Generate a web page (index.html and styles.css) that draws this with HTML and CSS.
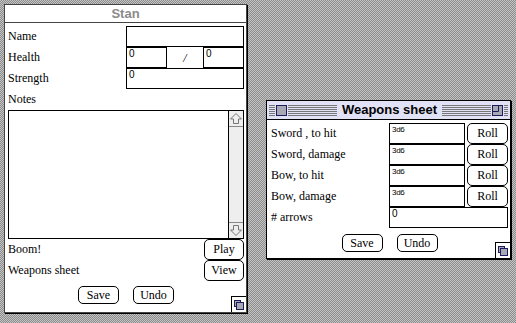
FILE: index.html
```html
<!DOCTYPE html>
<html lang="en">
  <head>
    <meta charset="UTF-8">
    <meta name="viewport" content="width=device-width, initial-scale=1.0">
    <title>Stan</title>
    <link rel="stylesheet" href="styles.css">
  </head>
  <body>
    <div class="window stan">
      <div class="titlebar">Stan</div>
      <div class="content">
        <div class="form">
          <label>Name</label>
          <div class="field"></div>
          <label>Health</label>
          <div class="health">
            <div class="field value">0</div>
            <span class="slash">/</span>
            <div class="field value">0</div>
          </div>
          <label>Strength</label>
          <div class="field value">0</div>
          <label>Notes</label>
        </div>
        <div class="notes">
          <div class="notes-text"></div>
          <div class="scrollbar">
            <div class="arrow up">
              <svg width="14" height="15" viewBox="0 0 14 15"><polygon points="7,2.5 12.5,8 9.5,8 9.5,12.5 4.5,12.5 4.5,8 1.5,8" fill="none" stroke="#777"/></svg>
            </div>
            <div class="track"></div>
            <div class="arrow down">
              <svg width="14" height="15" viewBox="0 0 14 15"><polygon points="7,12.5 12.5,7 9.5,7 9.5,2.5 4.5,2.5 4.5,7 1.5,7" fill="none" stroke="#777"/></svg>
            </div>
          </div>
        </div>
        <div class="form">
          <label>Boom!</label>
          <button class="btn side">Play</button>
          <label>Weapons sheet</label>
          <button class="btn side">View</button>
        </div>
        <div class="actions">
          <button class="btn">Save</button>
          <button class="btn">Undo</button>
        </div>
      </div>
      <div class="grow">
        <svg width="14" height="15" viewBox="0 0 14 15"><rect x="2.5" y="3.5" width="6" height="6" fill="#a8a8b4" stroke="#1c1c5c"/><rect x="4.5" y="5.5" width="7" height="7" fill="#a8a8b4" stroke="#1c1c5c"/></svg>
      </div>
    </div>

    <div class="window weapons">
      <div class="titlebar active">
        <div class="stripes">
          <span class="closebox"></span>
          <span class="title">Weapons sheet</span>
          <span class="zoombox">
            <svg width="11" height="11" viewBox="0 0 11 11"><rect x="0.5" y="0.5" width="10" height="10" fill="#a8a8b4" stroke="#1c1c5c"/><path d="M1 6.5 H6.5 V1" fill="none" stroke="#1c1c5c"/></svg>
          </span>
        </div>
      </div>
      <div class="content">
        <div class="sheet">
          <label>Sword , to hit</label>
          <div class="field dice">3d6</div>
          <button class="btn">Roll</button>
          <label>Sword, damage</label>
          <div class="field dice">3d6</div>
          <button class="btn">Roll</button>
          <label>Bow, to hit</label>
          <div class="field dice">3d6</div>
          <button class="btn">Roll</button>
          <label>Bow, damage</label>
          <div class="field dice">3d6</div>
          <button class="btn">Roll</button>
          <label># arrows</label>
          <div class="field value span">0</div>
        </div>
        <div class="actions">
          <button class="btn">Save</button>
          <button class="btn">Undo</button>
        </div>
      </div>
      <div class="grow">
        <svg width="14" height="15" viewBox="0 0 14 15"><rect x="2.5" y="3.5" width="6" height="6" fill="#a8a8b4" stroke="#1c1c5c"/><rect x="4.5" y="5.5" width="7" height="7" fill="#a8a8b4" stroke="#1c1c5c"/></svg>
      </div>
    </div>
  </body>
</html>
```

FILE: styles.css
```css
body {
  margin: 0;
  width: 516px;
  height: 323px;
  overflow: hidden;
  background: repeating-conic-gradient(#8c8c8c 0 25%, #c4c4c4 0 50%) 0 0 / 2px 2px;
  font-family: "Liberation Serif", serif;
  font-size: 12px;
  color: #000;
}
.window {
  position: absolute;
  box-sizing: border-box;
  background: #fff;
  border: 1px solid #000;
  box-shadow: 1px 1px 0 #000;
}
.stan {
  left: 4px;
  top: 4px;
  width: 243px;
  height: 309px;
  border-color: #444;
}
.weapons {
  left: 266px;
  top: 100px;
  width: 245px;
  height: 159px;
}
.titlebar {
  height: 17px;
  border-bottom: 1px solid #444;
  text-align: center;
  font: bold 13px/17px "Liberation Sans", sans-serif;
  color: #8a8a8a;
}
.titlebar.active {
  height: 18px;
  display: flex;
  align-items: center;
  padding: 0 2px;
  background: #e2e2f6;
  border-bottom-color: #000;
  color: #000;
}
.stripes {
  flex: 1;
  height: 11px;
  display: flex;
  align-items: center;
  justify-content: space-between;
  background: repeating-linear-gradient(to bottom, #777 0 1px, transparent 1px 2px);
}
.closebox {
  width: 11px;
  height: 11px;
  box-sizing: border-box;
  margin-left: 7px;
  border: 1px solid #1c1c5c;
  background: #a8a8b4;
  box-shadow: 0 0 0 1px #e2e2f6;
}
.zoombox {
  width: 11px;
  height: 11px;
  margin-right: 5px;
  box-shadow: 0 0 0 1px #e2e2f6;
}
.zoombox svg {
  display: block;
}
.title {
  padding: 0 5px;
  background: #e2e2f6;
  line-height: 18px;
}
.stan .content {
  padding: 3px 2px 0 3px;
}
.weapons .content {
  padding: 3px 2px 0 4px;
}
.form {
  display: grid;
  grid-template-columns: 1fr 118px;
  grid-auto-rows: 21px;
  align-items: center;
}
.sheet {
  display: grid;
  grid-template-columns: 1fr 76px 41px;
  grid-auto-rows: 21px;
  column-gap: 2px;
  align-items: center;
}
.field {
  box-sizing: border-box;
  height: 21px;
  border: 1px solid #000;
  background: #fff;
  padding: 0 2px;
}
.field.value {
  font: 10px/12px "Liberation Sans", sans-serif;
}
.field.dice {
  font: 8px/10px "Liberation Sans", sans-serif;
  letter-spacing: -0.3px;
  padding-top: 1px;
}
.field.span {
  grid-column: 2 / 4;
}
.health {
  display: flex;
  height: 21px;
}
.health .field {
  width: 41px;
}
.slash {
  flex: 1;
  text-align: center;
  line-height: 23px;
  font-style: italic;
}
.notes {
  display: flex;
  box-sizing: border-box;
  height: 129px;
  border: 1px solid #000;
}
.notes-text {
  flex: 1;
}
.scrollbar {
  width: 14px;
  display: flex;
  flex-direction: column;
  border-left: 1px solid #000;
  background: #eee;
}
.arrow {
  height: 15px;
}
.arrow svg {
  display: block;
}
.arrow.up {
  border-bottom: 1px solid #888;
}
.arrow.down {
  border-top: 1px solid #888;
}
.track {
  flex: 1;
}
.btn {
  box-sizing: border-box;
  height: 21px;
  margin: 0;
  padding: 0;
  border: 1px solid #000;
  border-radius: 5px;
  background: #fff;
  font-family: "Liberation Serif", serif;
  font-size: 12px;
  color: #000;
}
.btn.side {
  width: 40px;
  justify-self: end;
}
.actions {
  display: flex;
  justify-content: center;
  gap: 14px;
  margin-top: 5px;
}
.weapons .actions {
  margin-top: 6px;
}
.actions .btn {
  width: 41px;
  height: 18px;
}
.grow {
  position: absolute;
  right: 0;
  bottom: 0;
  width: 14px;
  height: 15px;
  border-left: 1px solid #000;
  border-top: 1px solid #000;
}
.grow svg {
  display: block;
}
```
